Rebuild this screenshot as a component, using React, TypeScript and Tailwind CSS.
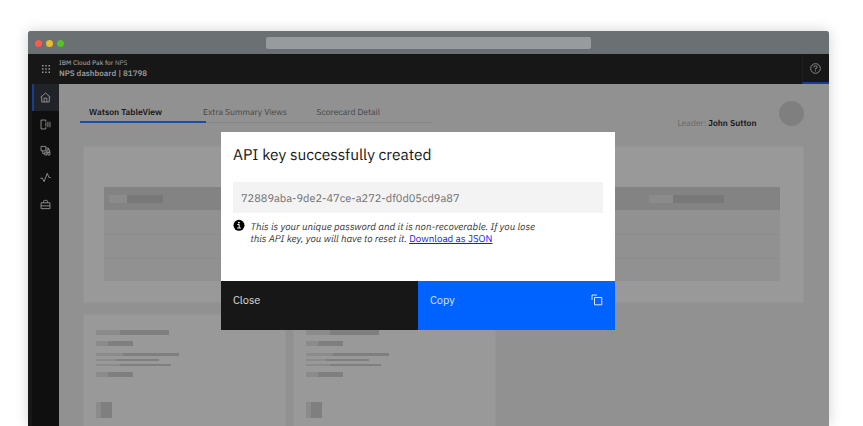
import React from "react";

type BarProps = { className: string; head: string };

/** Two-tone placeholder bar: lighter head, darker tail. */
function Bar({ className, head }: BarProps) {
  return (
    <div className={`flex bg-[#7f7f7f] ${className}`}>
      <div className={`h-full bg-[#8b8b8b] ${head}`} />
    </div>
  );
}

function Skeleton() {
  return (
    <div className="h-[112px] w-[203px] border border-b-0 border-[#959595] bg-[#999] pl-3 pt-[15px]">
      <Bar className="h-[5px] w-[73px]" head="w-[24px]" />
      <Bar className="mt-1.5 h-[5px] w-[37px]" head="w-[12px]" />
      <Bar className="mt-[7px] h-[2.5px] w-[83px]" head="w-[27px]" />
      <Bar className="mt-[3px] h-[2px] w-[63px]" head="w-[20px]" />
      <Bar className="mt-[3px] h-[2.5px] w-[75px]" head="w-[24px]" />
      <Bar className="mt-1.5 h-[5px] w-[37px]" head="w-[12px]" />
      <Bar className="mt-[25px] h-4 w-4" head="w-[5px]" />
    </div>
  );
}

function Icon({ children, size = 11 }: { children: React.ReactNode; size?: number }) {
  return (
    <svg width={size} height={size} viewBox="0 0 32 32" fill="none" stroke="#959595" strokeWidth="2.6">
      {children}
    </svg>
  );
}

function NavItem({ children, active = false }: { children: React.ReactNode; active?: boolean }) {
  return (
    <div
      className={`flex h-[26.75px] items-center justify-center ${
        active ? "border-l-2 border-[#173f91] bg-[#202428] pr-0.5" : ""
      }`}
    >
      {children}
    </div>
  );
}

export default function App() {
  return (
    <div className="relative h-[426px] w-[863px] overflow-hidden bg-white pl-7 pt-[31px] font-['IBM_Plex_Sans',Roboto,sans-serif] [text-rendering:geometricPrecision]">
      <div className="h-[395px] w-[801px] rounded-t-[3px] bg-[#919191] shadow-[0_0_14px_rgba(0,0,0,0.18)]">
        <div className="flex h-[23px] items-center rounded-t-[3px] bg-[#6b7073] pl-[7px]">
          <div className="flex gap-1 pt-px">
            <span className="size-[7px] rounded-full bg-[#fb5b50]" />
            <span className="size-[7px] rounded-full bg-[#e6bd2d]" />
            <span className="size-[7px] rounded-full bg-[#54c22b]" />
          </div>
          <div className="ml-[202px] h-3 w-[325px] rounded-[2px] bg-[#989b9d]" />
        </div>

        <header className="flex h-[30px] bg-[#171717]">
          <div className="flex w-[31px] items-center pl-[13.5px]">
            <svg width="8" height="8" viewBox="0 0 8 8" fill="#999">
              {[0, 3.25, 6.5].map((y) =>
                [0, 3.25, 6.5].map((x) => <rect key={`${x}-${y}`} x={x} y={y} width="1.5" height="1.5" />)
              )}
            </svg>
          </div>
          <div className="pt-1 text-[#999]">
            <div className="h-[11px] text-[6.6px] leading-[10px]">
              <span className="font-medium">IBM Cloud Pak for</span> NPS
            </div>
            <div className="text-[8px] font-semibold leading-[11px]">NPS dashboard | 81798</div>
          </div>
          <div className="ml-auto flex w-[27px] items-center justify-center border-b-2 border-l border-b-[#173f91] border-l-[#202020] pr-px">
            <Icon>
              <circle cx="16" cy="16" r="14" />
              <path d="M11.5 13v-1a3.5 3.5 0 0 1 3.5-3.5h2a3.7 3.7 0 0 1 0 7.4h-1v3.3M16 21.5v3" />
            </Icon>
          </div>
        </header>

        <div className="flex h-[342px]">
          <nav className="w-[31px] border-l-4 border-[#171717] bg-[#0f0f0f]">
            <NavItem active>
              <Icon>
                <path d="M2 15 16 3l14 12M5 13v16h22V13M12 29V18h8v11" />
              </Icon>
            </NavItem>
            <NavItem>
              <Icon>
                <path d="M17 8V3H3v26h14v-5M17 10v12M23 8v16M29 8v16" />
              </Icon>
            </NavItem>
            <NavItem>
              <Icon>
                <path d="M3 4h14v13H3zM8 17v8h6M17 9h8v5M14 21h6v8h-6zM20 14h8v7h-8zM23 21h6v8h-6z" />
              </Icon>
            </NavItem>
            <NavItem>
              <Icon>
                <path d="M1 18h6l5 10 9-24 5 12h5" />
              </Icon>
            </NavItem>
            <NavItem>
              <Icon>
                <path d="M3 11h26v17H3zM10 11V8c0-3 1-4 3-4h6c2 0 3 1 3 4v3M3 20h26" />
              </Icon>
            </NavItem>
          </nav>

          <main className="flex-1 pl-6">
            <div className="flex h-[62px]">
              <div className="-ml-[3px] flex h-[39px] w-[352px] border-b border-[#858585] pt-[23px] text-[8.6px] leading-3 text-[#464646]">
                <div className="h-4 w-[126px] border-b-2 border-[#154eb0] pl-[9px] font-semibold text-[#171717]">
                  Watson TableView
                </div>
                <div className="-ml-[3px] w-[110px] whitespace-nowrap">Extra Summary Views</div>
                <div className="ml-[3.5px]">Scorecard Detail</div>
              </div>
              <div className="ml-auto flex pr-[25px]">
                <div className="mr-[22.5px] pt-[34px] text-[8.6px] leading-3 text-[#686868]">
                  Leader: <span className="font-semibold text-[#171717]">John Sutton</span>
                </div>
                <div className="mt-[17px] size-[25px] rounded-full bg-[#7f7f7f]" />
              </div>
            </div>

            <section className="h-[157px] w-[721px] border border-[#959595] bg-[#999] pl-5 pt-10">
              <div className="w-[676px] bg-[#919191]">
                <div className="flex h-[23px] items-center bg-[#838383]">
                  <div className="ml-[5px] flex h-2 w-[54px] bg-[#787878]">
                    <div className="w-[18px] bg-[#8b8b8b]" />
                  </div>
                  <div className="ml-[486px] flex h-2 w-[75px] bg-[#787878]">
                    <div className="w-[24px] bg-[#8b8b8b]" />
                  </div>
                </div>
                <div className="h-[25px] border-b border-[#8c8c8c]" />
                <div className="h-[24px] border-b border-[#8c8c8c]" />
                <div className="h-[22px]" />
              </div>
            </section>

            <div className="mt-[11px] flex gap-[7px]">
              <Skeleton />
              <Skeleton />
            </div>
          </main>
        </div>
      </div>

      <div role="dialog" className="absolute left-[220.5px] top-[131.5px] flex h-[198.5px] w-[394.5px] flex-col bg-white">
        <div className="flex-1 px-[12.5px] pt-[13px]">
          <h1 className="text-[15.5px] leading-5 text-[#171717]">API key successfully created</h1>
          <div className="mt-[17.5px] flex h-[31px] items-center bg-[#f3f3f3] pl-2 pt-[3px] text-[11px] text-[#6f6f6f]">
            72889aba-9de2-47ce-a272-df0d05cd9a87
          </div>
          <div className="mt-[7px] flex">
            <svg className="-mt-px" width="12" height="12" viewBox="0 0 12 12">
              <circle cx="6" cy="6.3" r="5.5" fill="#000" />
              <circle cx="5.9" cy="3.6" r=".9" fill="#fff" />
              <path d="M4.4 5.5h1.8v3.4M4.2 9h3.6" stroke="#fff" strokeWidth="1" fill="none" />
            </svg>
            <p className="ml-[5.5px] whitespace-nowrap pt-[0.5px] text-[9.8px] leading-[12.3px] text-[#343434]">
              <em>This is your unique password and it is non-recoverable. If you lose</em>
              <br />
              <em>this API key, you will have to reset it.</em>{" "}
              <a className="text-[#2018ee] underline">Download as JSON</a>
            </p>
          </div>
        </div>
        <div className="flex h-[49px] text-[11px] leading-4 text-white/85">
          <button className="flex w-[197px] items-start bg-[#171717] pl-[12.5px] pt-[11px]">Close</button>
          <button className="flex flex-1 items-start justify-between bg-[#0062ff] pl-[12.5px] pr-3 pt-[11px]">
            Copy
            <svg className="mt-[2px]" width="12" height="12" viewBox="0 0 12 12" fill="none" stroke="#d9e8ff">
              <path d="M3.5 3.5h7.3v7.3H3.5zM1 6V1h5" />
            </svg>
          </button>
        </div>
      </div>
    </div>
  );
}
